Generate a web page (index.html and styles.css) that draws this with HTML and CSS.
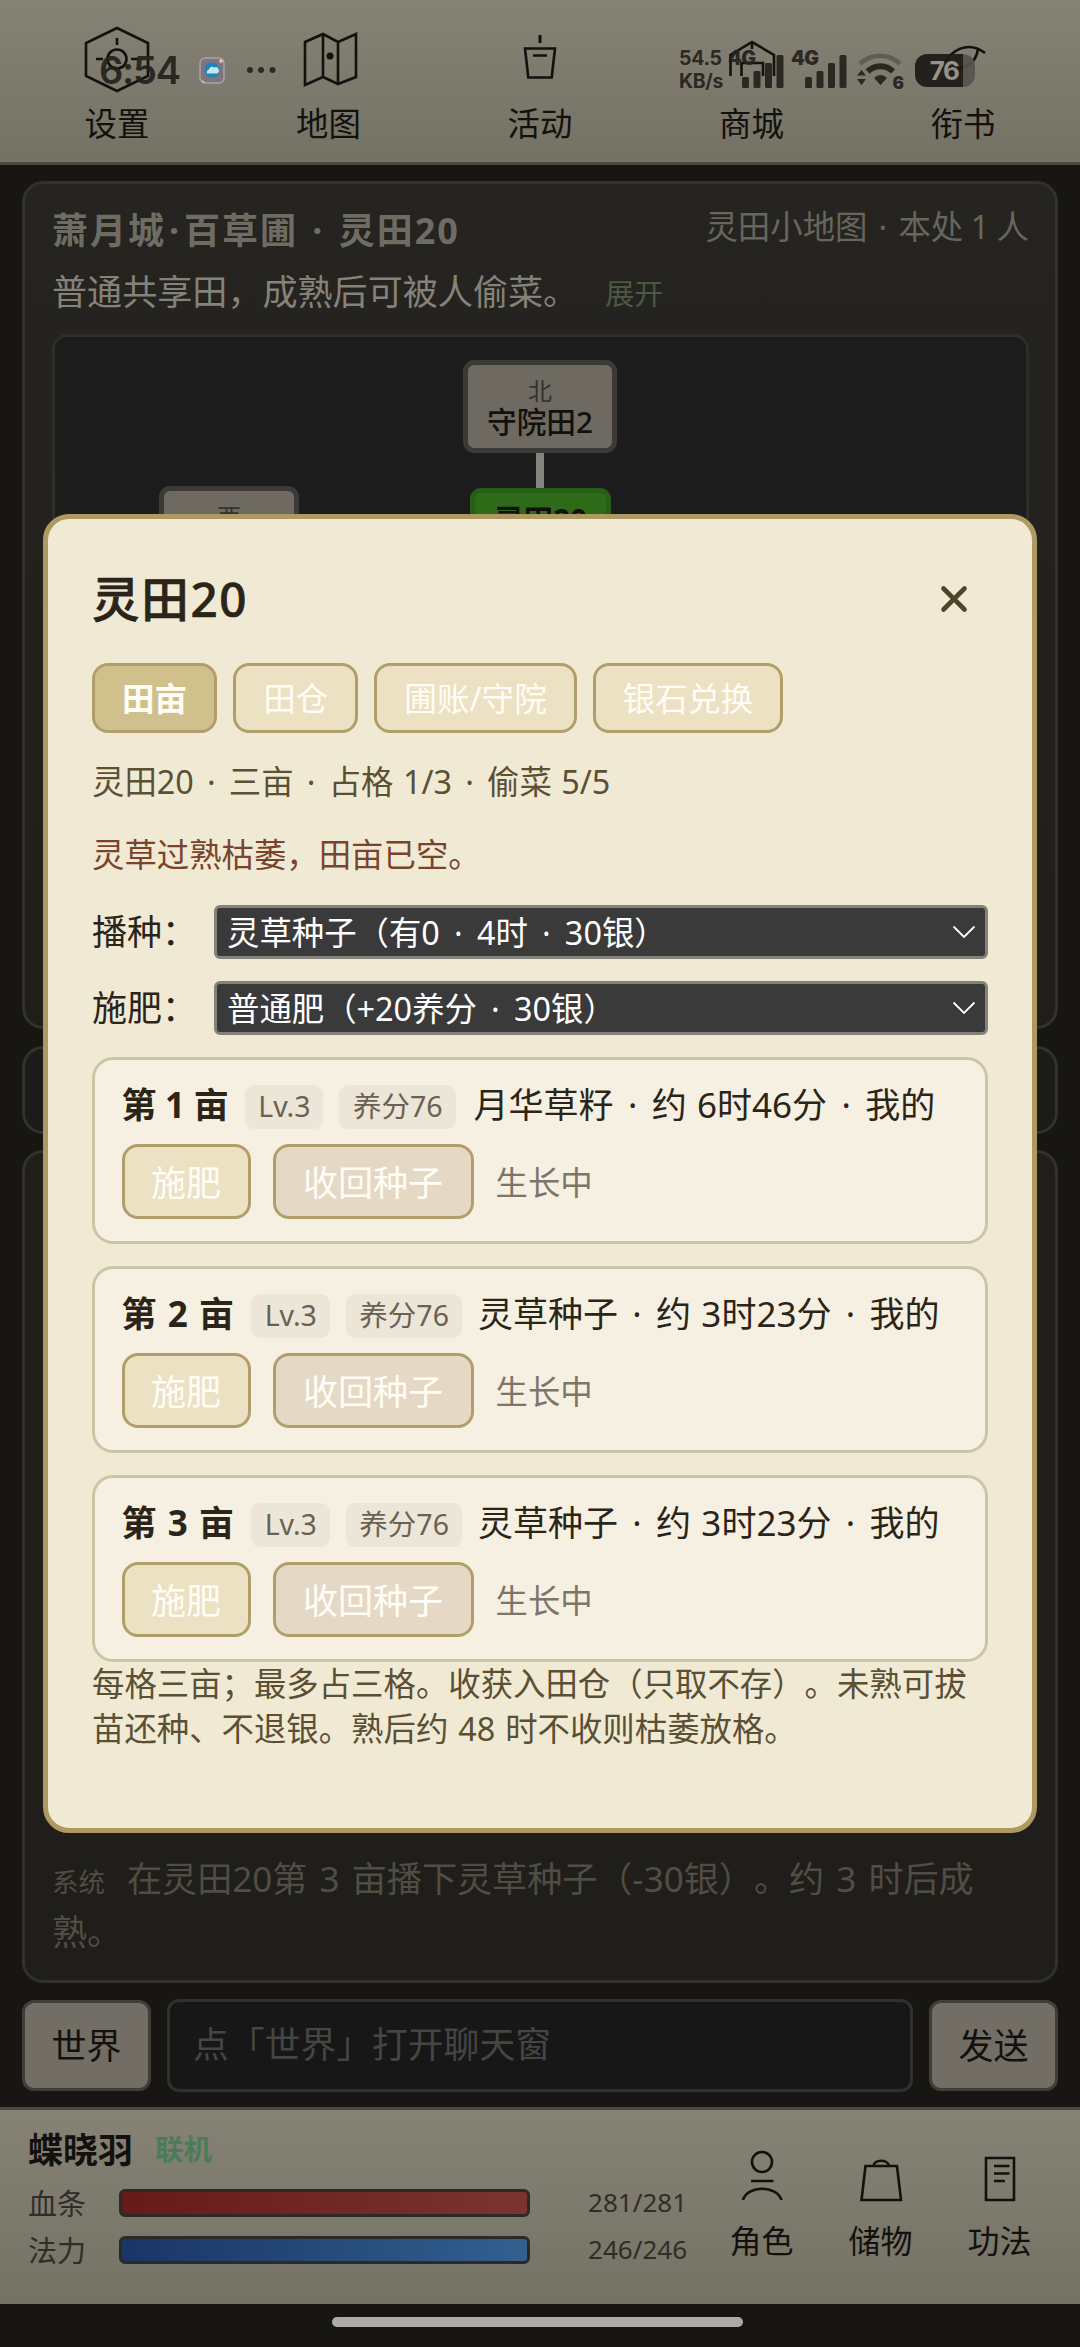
FILE: index.html
```
<!DOCTYPE html>
<html lang="zh-CN">
<head>
<meta charset="utf-8">
<title>灵田20</title>
<link rel="stylesheet" href="styles.css">
</head>
<body>
<div class="app">
  <nav class="topnav">
    <div class="topnav-item"><svg class="icon" viewBox="0 0 72 72"><path d="M36 5 67 20V53L36 68 5 53V20Z"/><circle cx="36" cy="36" r="9.5"/><path d="M36 15v7M15 36h7M50 36h7"/></svg><span>设置</span></div>
    <div class="topnav-item"><svg class="icon" viewBox="0 0 72 72"><path d="M12 19 30 11 45 19 63 11V54L45 61 30 54 12 62ZM30 11V54M45 19V61"/><circle class="fill" cx="37" cy="33" r="3.5"/></svg><span>地图</span></div>
    <div class="topnav-item"><svg class="icon" viewBox="0 0 72 72"><path d="M21 25.500H51L47.700 54.500H24.300ZM29 32.500H43"/><path class="thick" d="M36 12v8"/></svg><span>活动</span></div>
    <div class="topnav-item"><svg class="icon" viewBox="0 0 72 72"><path d="M14.500 53V32L36 19 58 32V53M36 19v7M25.500 53V40H47V53"/></svg><span>商城</span></div>
    <div class="topnav-item"><svg class="icon" viewBox="0 0 72 72"><path d="M14 48C18 34 30 24 42 24 49 24 54 27 58 30M51 26C49 40 40 46 22 47"/><circle class="fill" cx="22" cy="48" r="2"/></svg><span>衔书</span></div>
  </nav>

  <main class="content">
    <section class="panel place">
      <header class="place-head">
        <h1>萧月城<i>·</i>百草圃 <i>·</i> 灵田20</h1>
        <span class="place-note">灵田小地图 <i>·</i> 本处 1 人</span>
      </header>
      <p class="place-desc">普通共享田，成熟后可被人偷菜。<a>展开</a></p>
      <div class="minimap">
        <div class="link"></div>
        <div class="node north"><small>北</small><b>守院田2</b></div>
        <div class="node west"><small>西</small></div>
        <div class="node here"><b>灵田20</b></div>
      </div>
    </section>
    <section class="panel strip"></section>
    <section class="panel log">
      <p><small>系统</small>在灵田20第 3 亩播下灵草种子（-30银）。约 3 时后成<br>熟。</p>
    </section>
    <div class="chat">
      <button class="chat-btn">世界</button>
      <div class="chat-input">点「世界」打开聊天窗</div>
      <button class="chat-btn">发送</button>
    </div>
  </main>

  <footer class="hud">
    <div class="stats">
      <div class="who"><b>蝶晓羽</b><em>联机</em></div>
      <div class="stat"><span>血条</span><div class="bar hp"></div><span class="num">281/281</span></div>
      <div class="stat"><span>法力</span><div class="bar mp"></div><span class="num">246/246</span></div>
    </div>
    <div class="hud-nav">
      <div><svg class="icon" viewBox="0 0 60 60"><circle cx="30" cy="15" r="10"/><path d="M19 34H41.500M11 53C15 38 45 38 49.500 53"/></svg><span>角色</span></div>
      <div><svg class="icon" viewBox="0 0 60 60"><path d="M14.500 19H46L50 53H10.500ZM22.500 19C23 12 37 12 38 19"/></svg><span>储物</span></div>
      <div><svg class="icon" viewBox="0 0 60 60"><path d="M16 11H44V53H16ZM24 19H39.500M24 26.500H39.500M24 34H35"/></svg><span>功法</span></div>
    </div>
  </footer>
  <div class="gesture"><span></span></div>

  <div class="status">
    <span class="clock">6:54</span>
    <svg class="applet" viewBox="0 0 26 27"><rect x="1" y="1" width="24" height="25" rx="5" fill="#7d7581" stroke="#b3a4ad" stroke-width="1.500"/><circle cx="13" cy="13" r="7.500" fill="#1a84bf"/><path d="M8 16.500a3 3 0 0 1 2-4 3 3 0 0 1 5-2 3 3 0 0 1 3 6Z" fill="#c4f2fb"/><path d="M22 1l1 2 2 1-2 1-1 2-1-2-2-1 2-1ZM3 22l1 2 2 1-2 1-1-2Z" fill="#efc3c3"/></svg>
    <svg class="more" viewBox="0 0 30 8"><circle cx="4" cy="4" r="3"/><circle cx="15" cy="4" r="3"/><circle cx="26.500" cy="4" r="3"/></svg>
    <span class="rate">54.5<br>KB/s</span>
    <span class="cell"><b>4G</b><svg viewBox="0 0 42 33"><rect x="0" y="22" width="7" height="11" rx="1.500"/><rect x="11.500" y="16" width="7" height="17" rx="1.500"/><rect x="23" y="8" width="7" height="25" rx="1.500"/><rect x="34.500" y="0" width="7" height="33" rx="1.500"/></svg></span>
    <span class="cell"><b>4G</b><svg viewBox="0 0 42 33"><rect x="0" y="22" width="7" height="11" rx="1.500"/><rect x="11.500" y="16" width="7" height="17" rx="1.500"/><rect x="23" y="8" width="7" height="25" rx="1.500"/><rect x="34.500" y="0" width="7" height="33" rx="1.500"/></svg></span>
    <span class="wifi"><svg viewBox="0 0 46 36"><path d="M3 12C14 1 32 1 43 12" fill="none" stroke="#5d5a51" stroke-width="4.500"/><path d="M10.500 19.500C18 12.500 29 12.500 36 19.500" fill="none" stroke="#24221d" stroke-width="6"/><path d="M17 26Q23.500 20 30 26L23.500 33ZM0 23.500 4.500 18 9 23.500ZM0 27 4.500 33 9 27Z"/></svg><b>6</b></span>
    <span class="battery">76</span>
  </div>

  <div class="modal">
    <header class="modal-head">
      <h2>灵田20</h2>
      <svg class="close" viewBox="0 0 28 28"><path d="M3.500 3.500 24.500 24.500M24.500 3.500 3.500 24.500"/></svg>
    </header>
    <div class="tabs">
      <button class="tab active">田亩</button><button class="tab">田仓</button><button class="tab">圃账/守院</button><button class="tab">银石兑换</button>
    </div>
    <p class="summary">灵田20 <i>·</i> 三亩 <i>·</i> 占格 1/3 <i>·</i> 偷菜 5/5</p>
    <p class="warn">灵草过熟枯萎，田亩已空。</p>
    <div class="field"><label>播种：</label><div class="select"><span>灵草种子（有0 <i>·</i> 4时 <i>·</i> 30银）</span><svg viewBox="0 0 24 14"><path d="M1.500 1.500 12 12 22.500 1.500"/></svg></div></div>
    <div class="field"><label>施肥：</label><div class="select"><span>普通肥（+20养分 <i>·</i> 30银）</span><svg viewBox="0 0 24 14"><path d="M1.500 1.500 12 12 22.500 1.500"/></svg></div></div>
    <div class="plots">
      <article class="plot">
        <div class="plot-info"><b>第 1 亩</b><span class="tag">Lv.3</span><span class="tag">养分76</span><span>月华草籽 <i>·</i> 约 6时46分 <i>·</i> 我的</span></div>
        <div class="plot-acts"><button class="act">施肥</button><button class="act recall">收回种子</button><span>生长中</span></div>
      </article>
      <article class="plot">
        <div class="plot-info"><b>第 2 亩</b><span class="tag">Lv.3</span><span class="tag">养分76</span><span>灵草种子 <i>·</i> 约 3时23分 <i>·</i> 我的</span></div>
        <div class="plot-acts"><button class="act">施肥</button><button class="act recall">收回种子</button><span>生长中</span></div>
      </article>
      <article class="plot">
        <div class="plot-info"><b>第 3 亩</b><span class="tag">Lv.3</span><span class="tag">养分76</span><span>灵草种子 <i>·</i> 约 3时23分 <i>·</i> 我的</span></div>
        <div class="plot-acts"><button class="act">施肥</button><button class="act recall">收回种子</button><span>生长中</span></div>
      </article>
    </div>
    <p class="help">每格三亩；最多占三格。收获入田仓（只取不存）。未熟可拔<br>苗还种、不退银。熟后约 48 时不收则枯萎放格。</p>
  </div>
</div>
</body>
</html>
```
FILE: styles.css
```
* { box-sizing: border-box; margin: 0; padding: 0; }
body {
  background: #171613;
  font-family: "Noto Sans", "Noto Sans CJK SC", sans-serif;
  font-size: 35px;
  text-spacing-trim: space-all;
  white-space: nowrap;
}
button { font: inherit; }
i { display: inline-block; width: .5em; text-align: center; font-style: normal; }
.app { position: relative; display: flex; flex-direction: column; width: 1080px; height: 2347px; overflow: hidden; }
.icon { fill: none; stroke: #12110d; stroke-width: 2.600; }
.icon .fill { fill: #12110d; stroke: none; }
.icon .thick { stroke-width: 3; }

/* top navigation */
.topnav {
  display: grid; grid-template-columns: repeat(5, 211.500px); justify-content: center;
  height: 165px; padding-top: 23px;
  background: linear-gradient(#868276, #747165);
  border-bottom: 3px solid #4a4941;
}
.topnav-item { display: flex; flex-direction: column; align-items: center; color: #12110d; font-size: 32.400px; }
.topnav-item .icon { width: 72px; height: 72px; }
.topnav-item span { line-height: 40px; margin-top: 8px; }

/* main column */
.content { display: flex; flex-direction: column; padding: 16px 22px 0; height: 1942px; }
.panel { border: 3px solid #32312d; border-radius: 21px; background: #24231f; }
.place { height: 848px; padding: 21px 26px 0 27px; color: #7d7a72; background: linear-gradient(#252420, #1f1e1a); }
.place-head { display: flex; justify-content: space-between; height: 52px; }
.place-head h1 { font-size: 36px; font-weight: 700; line-height: 51px; letter-spacing: 2px; color: #6f6c64; }
.place-note { font-size: 32.400px; line-height: 43px; color: #68655d; word-spacing: -1px; }
.place-desc { margin-top: 8px; height: 52px; font-size: 35.100px; line-height: 52px; color: #85827a; }
.place-desc a { margin-left: 27px; font-size: 29px; color: #4d5842; }
.minimap { position: relative; height: 470px; margin-top: 17px; background: #1c1c1c; border: 3px solid #2e2d2a; border-radius: 15px; }
.node {
  position: absolute; display: flex; flex-direction: column; align-items: center; justify-content: center;
  border: 5px solid #3c3a36; border-radius: 11px; background: #6e6a61; color: #12110d; font-size: 29.700px; line-height: 31px;
}
.node b { font-weight: 500; }
.node small { font-size: 24px; line-height: 30px; color: #35322c; }
.north { left: 408px; top: 23px; width: 154px; height: 93px; }
.west { left: 104px; top: 149px; width: 140px; height: 93px; justify-content: flex-start; padding-top: 11px; }
.here { left: 415px; top: 151px; width: 141px; height: 93px; justify-content: flex-start; padding-top: 11px; background: #2e6b19; border-color: #285f17; }
.here b { font-weight: 700; }
.link { position: absolute; left: 481px; top: 114px; width: 8px; height: 38px; background: #85837d; }
.strip { height: 88px; margin-top: 17px; background: #1b1b1a; }
.log { display: flex; align-items: flex-end; height: 833px; margin-top: 16px; padding: 0 29px 22px 27px; background: #201e1a; color: #504d44; }
.log p { font-size: 35.100px; line-height: 53px; word-spacing: 3px; }
.log small { margin-right: 22px; font-size: 26.500px; line-height: 1; }

.chat { display: flex; align-items: center; justify-content: space-between; margin-top: 15px; height: 94px; }
.chat-btn { width: 129px; height: 91px; padding-bottom: 4px; border: 3px solid #403e38; border-radius: 12px; background: #726e65; color: #12110d; font-size: 35px; }
.chat-input { width: 746px; height: 93px; padding-left: 23px; border: 3px solid #31302e; border-radius: 12px; background: #171717; color: #454544; line-height: 85px; font-size: 35.800px; }

/* character hud */
.hud { display: flex; height: 197px; border-top: 3px solid #4c4a42; background: linear-gradient(#868276, #747165); color: #2f2d27; }
.stats { display: flex; flex-direction: column; width: 687px; padding: 14px 0 0 28px; }
.who { display: flex; align-items: center; gap: 22px; height: 47px; color: #12110d; }
.who b { font-size: 35px; font-weight: 700; }
.who em { font-size: 28.500px; font-weight: 700; font-style: normal; color: #4a7d57; }
.stat { display: flex; align-items: center; height: 47px; font-size: 29px; }
.stat span { padding-bottom: 2px; }
.stat > span:first-child { width: 91px; }
.who + .stat { margin-top: 8px; }
.bar { width: 411px; height: 28px; border: 3px solid #2c2a25; border-radius: 6px; }
.hp { background: linear-gradient(90deg, #651b18, #7c3431); }
.mp { background: linear-gradient(90deg, #1a3566, #32608f); }
.num { flex: 1; text-align: right; font-size: 26px; }
.hud-nav { display: grid; grid-template-columns: repeat(3, 119px); margin-left: 15px; padding-top: 37px; }
.hud-nav div { display: flex; flex-direction: column; align-items: center; color: #12110d; font-size: 32px; }
.hud-nav .icon { width: 60px; height: 60px; }
.hud-nav span { line-height: 40px; margin-top: 14px; }
.gesture { display: flex; justify-content: center; padding: 13px 6px 0 0; height: 43px; }
.gesture span { width: 411px; height: 10px; border-radius: 5px; background: #acaba8; }

/* system status bar over the page */
.status { position: absolute; left: 99px; top: 48px; width: 890px; height: 44px; display: flex; align-items: center; color: #24221d; font-family: Inter, sans-serif; font-weight: 700; opacity: .92; }
.status > * { flex: none; }
.status svg { fill: #24221d; }
.clock { width: 80px; font-size: 38px; font-weight: 600; letter-spacing: -1.200px; }
.applet { width: 26px; height: 27px; margin-left: 20px; }
.more { width: 30px; height: 8px; margin-left: 21px; }
.rate { margin-left: 403px; width: 44px; font-size: 19.500px; line-height: 23px; letter-spacing: -.3px; }
.cell { position: relative; width: 55px; height: 33px; margin-left: 5px; padding-left: 14px; }
.cell b { position: absolute; left: 0; top: -7px; font-size: 19.500px; line-height: 23px; letter-spacing: -.5px; }
.cell svg { width: 42px; height: 33px; }
.cell + .cell { margin-left: 8px; }
.wifi { position: relative; width: 46px; height: 36px; margin-left: 11px; }
.wifi svg { width: 46px; height: 36px; }
.wifi b { position: absolute; right: -1px; bottom: -5px; font-size: 17px; line-height: 20px; }
.battery { width: 60px; height: 33px; margin-left: 12px; padding-right: 2px; border-radius: 12px; background: linear-gradient(90deg, #1b1a17 48px, #57534d 48px); color: #9a968b; font-size: 26px; line-height: 33px; text-align: center; letter-spacing: -1.500px; }

/* field dialog */
.modal { position: absolute; left: 43px; top: 514px; width: 994px; height: 1319px; padding: 52px 44px 0; border: 5px solid #ae9962; border-radius: 26px; background: #f0ead5; color: #2b2418; }
.modal-head { display: flex; align-items: center; justify-content: space-between; height: 56px; padding: 0 20px 0 0; }
.modal-head h2 { font-size: 47.500px; font-weight: 500; line-height: 56px; letter-spacing: 1.700px; -webkit-text-stroke: .7px #2b2418; }
.close { width: 28px; height: 28px; fill: none; stroke: #4f4428; stroke-width: 4.600; stroke-linecap: round; }
.tabs { display: flex; gap: 16px; height: 70px; margin-top: 36px; }
.tab, .act { border: 3px solid #b29e6b; border-radius: 16px; background: #ece1c3; color: #fffdf6; }
.tab { padding: 0 27px 3px; font-size: 32.600px; }
.tab.active { background: #d0c08c; color: #fffdf6; font-weight: 700; }
.summary, .warn { height: 48px; font-size: 32.400px; line-height: 48px; }
.summary { margin-top: 24px; color: #5b4f34; word-spacing: 1px; }
.warn { margin-top: 25px; color: #7a432b; }
.field { display: flex; height: 54px; margin-top: 22px; line-height: 54px; }
.warn + .field { margin-top: 27px; }
.field label { width: 122px; font-size: 35px; }
.select { display: flex; align-items: center; justify-content: space-between; flex: 1; padding: 0 9px 0 10px; border: 3px solid #83827a; border-radius: 6px; background: #3a3a3a; color: #fff; font-size: 32.400px; line-height: 44px; word-spacing: 2px; }
.select svg { width: 24px; height: 14px; fill: none; stroke: #fff; stroke-width: 1.800; }
.plots { display: flex; flex-direction: column; gap: 22.500px; margin-top: 22px; }
.plot { height: 186.500px; padding: 20.500px 0 0 26.500px; border: 3px solid #cdc4a6; border-radius: 21px; background: #f6f0e2; }
.plot-info { display: flex; align-items: center; height: 48px; font-size: 35px; line-height: 48px; word-spacing: 1.200px; }
.plot-info b { margin-right: 17px; font-weight: 700; word-spacing: 2.200px; }
.plot:first-child b { margin-right: 16px; word-spacing: -.5px; }
.plot:first-child .tag + span:last-child { margin-left: 2px; }
.tag { height: 44px; margin: 4px 16px 0 0; padding: 0 13px 0 13.500px; border-radius: 9px; background: #ece6d9; color: #6a6151; font-size: 28.500px; line-height: 42px; }
.plot-acts { display: flex; align-items: center; height: 74px; margin-top: 16px; }
.plot-acts span { padding-bottom: 2px; font-size: 32.400px; color: #7d7567; }
.act { height: 75px; margin-right: 22px; padding: 0 26.500px 3px; font-size: 35px; }
.recall { padding: 0 27.500px 3px; background: #e5d9c5; }
.help { margin-top: -1px; font-size: 32.400px; line-height: 45px; color: #5b4f34; word-spacing: 1.500px; }
```
